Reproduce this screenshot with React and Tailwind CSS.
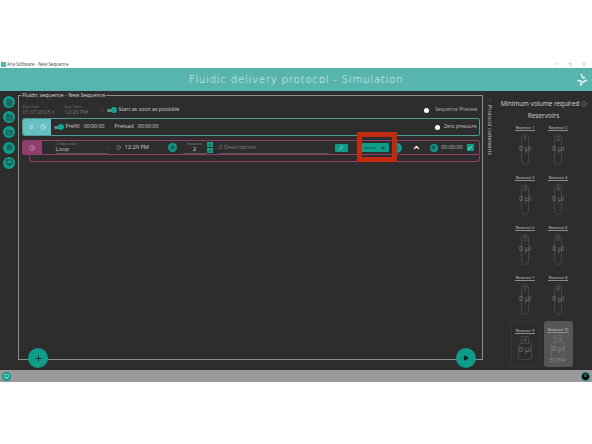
import React from "react"
import {
  Plus,
  Play,
  Clock,
  FileText,
  Image,
  FolderOpen,
  Settings,
  Monitor,
  Check,
  ChevronUp,
  ChevronLeft,
  Pencil,
  Info,
  Calendar,
  Minus,
  X,
  Square,
} from "lucide-react"

const sideIcons = [FileText, Image, FolderOpen, Settings, Monitor]

// ---------------------
// Small pieces
// ---------------------
const Toggle = () => (
  <span className="relative block w-[9px] h-[3px] rounded-full bg-[#5f8f8a]">
    <span className="absolute right-[-1px] top-[-1.5px] w-[6px] h-[6px] rounded-full bg-[#12a594]" />
  </span>
)

const RoundIcon = ({ icon: Icon, size = 12, iconSize = 7, className = "text-[#2d2d2d]" }) => (
  <span
    className={`flex items-center justify-center rounded-full bg-[#0f9d8a] ${className}`}
    style={{ width: size, height: size }}
  >
    <Icon size={iconSize} strokeWidth={2.5} />
  </span>
)

const ReservoirLabel = ({ n }) => (
  <span className="text-[3.5px] leading-[5px] text-[#d8d8d8] border-b border-[#8c8c8c] px-[1px] whitespace-nowrap">
    Reservoir {n}
  </span>
)

const Reservoir = ({ n }) => (
  <div className="flex flex-col items-center w-[29px] h-[48px] shrink-0 pt-[2px]">
    <ReservoirLabel n={n} />
    <div className="mt-[3px] flex flex-col items-center w-[8px] h-[31px] rounded-full border border-[#454545] text-[#666]">
      <span className="text-[7px] leading-[8px]">{n}</span>
      <span className="mt-[1px] text-[7px] leading-[9px] text-[#7d7d7d] whitespace-nowrap">0 µl</span>
    </div>
  </div>
)

const Bottle = ({ n, buffer }) => (
  <div
    className={`flex flex-col items-center w-[29px] h-[46px] -mt-[2px] pt-[6px] shrink-0 rounded-[3px] ${
      buffer ? "bg-[#565656]" : "border border-dotted border-[#3f3f3f]"
    }`}
  >
    <ReservoirLabel n={n} />
    <div
      className={`mt-[2px] w-[8px] h-[7px] rounded-t-[1px] border border-b-0 flex justify-center text-[6px] leading-[7px] ${
        buffer ? "border-[#666] text-[#808080]" : "border-[#454545] text-[#6a6a6a]"
      }`}
    >
      {n}
    </div>
    <div
      className={`w-[14px] h-[17px] rounded-[2px] border flex justify-center text-[7px] leading-[12px] whitespace-nowrap ${
        buffer ? "border-[#666] text-[#8c8c8c]" : "border-[#454545] text-[#7d7d7d]"
      }`}
    >
      0 µl
    </div>
    {buffer && <span className="-mt-[2px] text-[6px] leading-[7px] text-[#858585]">Buffer</span>}
  </div>
)

// ---------------------
// Component
// ---------------------
export default function App() {
  return (
    <div
      className="relative w-[592px] h-[444px] flex flex-col bg-white overflow-hidden text-[#d0d0d0]"
      style={{ fontFamily: '"Open Sans", "Noto Sans", sans-serif' }}
    >
      {/* Window title bar */}
      <div className="h-[68px] flex items-end justify-between pb-[1px] text-[#444]">
        <div className="flex items-center gap-[1px] pl-[1px]">
          <span className="w-[5px] h-[5px] bg-[#58b5ae]" />
          <span className="text-[4.4px] leading-[6px]">Aria Software - New Sequence</span>
        </div>
        <div className="flex items-center gap-[10px] pr-[6px] h-[6px] text-[#666]">
          <Minus size={4} />
          <Square size={3} />
          <X size={4} />
        </div>
      </div>

      {/* Header */}
      <div className="relative h-[23px] bg-[#58b5ae] flex items-center justify-center">
        <span
          className="text-[10.5px] tracking-[0.6px] font-extralight text-[#e4f3f1]"
          style={{ fontFamily: '"DejaVu Sans", sans-serif' }}
        >
          Fluidic delivery protocol - Simulation
        </span>
        <svg
          className="absolute right-0 top-0"
          width="22"
          height="23"
          viewBox="0 0 22 23"
          fill="none"
          stroke="#eef8f7"
          strokeWidth="1.4"
        >
          <path d="M11 6 13 10 15 9.5M7.5 12.5 11 13 10 14.5M10 17.5 13 14 17 12" />
        </svg>
      </div>

      {/* Main */}
      <div className="h-[279px] flex bg-[#2d2d2d]">
        <div className="w-[18px] shrink-0 flex flex-col items-center pt-[5px] gap-[3.2px]">
          {sideIcons.map((Icon, i) => (
            <RoundIcon key={i} icon={Icon} size={12} iconSize={7} />
          ))}
        </div>

        {/* Sequence frame */}
        <div className="relative w-[465px] h-[265px] mt-[4px] shrink-0 border-[1.5px] border-[#8d8d8d] px-[2.5px]">
          <span className="absolute left-[2px] top-[-4px] bg-[#2d2d2d] px-[1px] text-[5.4px] leading-[7px] text-[#dcdcdc] whitespace-nowrap">
            Fluidic sequence - New Sequence
          </span>

          {/* Start row */}
          <div className="h-[18px] flex items-center pt-[10px]">
            <div className="w-[41px] ml-[1px] text-[#787878]">
              <div className="text-[3.5px] leading-[4px]">Start Date</div>
              <div className="flex items-center gap-[1px] text-[5.5px] leading-[7px]">
                01.07.2025 <Calendar size={3} />
              </div>
            </div>
            <div className="w-[35px] ml-[1px] text-[#787878]">
              <div className="text-[3.5px] leading-[4px]">Start Time</div>
              <div className="text-[5.5px] leading-[7px]">12:29 PM</div>
            </div>
            <Clock size={4} className="text-[#555]" />
            <span className="ml-[3px]">
              <Toggle />
            </span>
            <span className="ml-[3px] text-[5.3px] whitespace-nowrap">Start as soon as possible</span>
            <span className="ml-auto w-[5px] h-[5px] rounded-full bg-white" />
            <span className="ml-[6px] mr-[2px] text-[5px] text-[#b5b5b5] whitespace-nowrap">Sequence Preview</span>
          </div>

          {/* Zero row */}
          <div className="mt-[4px] h-[18px] flex items-center rounded-[2px] border border-[#4f9a94] pr-[1px]">
            <div className="w-[28px] h-full shrink-0 flex items-center bg-[#66bfc0] text-[#e6f5f5] rounded-l-[2px]">
              <span className="ml-[7px] text-[6px]">0</span>
              <Clock size={6} className="ml-[7px]" />
            </div>
            <span className="ml-[3px]">
              <Toggle />
            </span>
            <span className="ml-[3px] text-[5.3px]">Prefill</span>
            <span className="ml-[4px] text-[5.3px]">00:00:00</span>
            <span className="ml-[10px] text-[5.3px]">Preload</span>
            <span className="ml-[4px] text-[5.3px]">00:00:00</span>
            <span className="ml-auto w-[5px] h-[5px] rounded-full bg-white" />
            <span className="ml-[4px] mr-[1px] text-[5px] text-[#c4c4c4] whitespace-nowrap">Zero pressure</span>
          </div>

          {/* Step */}
          <div className="mt-[4px] h-[15px] flex items-center rounded-[2px] border border-[#8f3e6d]">
            <div className="w-[19px] h-full shrink-0 flex items-center justify-center bg-[#8f3e6d] text-[#d9b9cc]">
              <Clock size={6} />
            </div>
            <div className="ml-[14px] w-[52px] h-full border-b border-[#555] text-[#bdbdbd]">
              <div className="mt-[1px] text-[3.5px] leading-[4px] text-[#8a8a8a]">⠿ Step action</div>
              <div className="text-[6px] leading-[7px]">Loop</div>
            </div>
            <span className="text-[6px] text-[#999]">-</span>
            <Clock size={5} className="ml-[7px] text-[#aaa]" />
            <span className="ml-[3px] text-[5.7px] whitespace-nowrap">12:29 PM</span>
            <span className="ml-[19px]">
              <RoundIcon icon={Settings} size={9} iconSize={5} />
            </span>
            <div className="ml-[6px] w-[23px] h-full border-b border-[#555] flex flex-col items-center">
              <span className="text-[3.5px] leading-[5px] text-[#8a8a8a] whitespace-nowrap">Iterations</span>
              <span className="text-[6px] leading-[7px]">2</span>
            </div>
            <div className="ml-[1px] flex flex-col gap-[1px]">
              <span className="w-[6px] h-[5px] flex items-center justify-center bg-[#0f9d8a] text-[#2d2d2d]">
                <Plus size={4} strokeWidth={3} />
              </span>
              <span className="w-[6px] h-[5px] flex items-center justify-center bg-[#0f9d8a] text-[#2d2d2d]">
                <Minus size={4} strokeWidth={3} />
              </span>
            </div>
            <div className="ml-[6px] w-[110px] h-full border-b border-[#555] flex items-center text-[#808080]">
              <span className="text-[6px] whitespace-nowrap">≡ Description</span>
            </div>
            <span className="ml-[6px] w-[13px] h-[8px] flex items-center justify-center bg-[#0f9d8a] rounded-[1px] text-[#e8e8e8]">
              <Pencil size={4} strokeWidth={2.5} />
            </span>
            <span className="ml-[13px] w-[28px] h-[9px] flex items-center justify-between px-[3px] bg-[#0f9d8a] rounded-[1px] text-[#1f2b2a]">
              <span className="text-[3.5px]">Variant</span>
              <Plus size={6} strokeWidth={2.5} />
            </span>
            <span className="ml-[3px]">
              <RoundIcon icon={Plus} size={10} iconSize={7} />
            </span>
            <ChevronUp size={9} strokeWidth={3} className="ml-[10px] text-white" />
            <span className="ml-[9px]">
              <RoundIcon icon={Settings} size={8} iconSize={5} />
            </span>
            <span className="ml-[3px] text-[5.5px] text-[#bdbdbd]">00:00:00</span>
            <span className="ml-[4px] w-[7px] h-[7px] flex items-center justify-center bg-[#0f9d8a] text-[#d8f0ec]">
              <Check size={6} strokeWidth={3} />
            </span>
          </div>
          <div className="ml-[7px] h-[7px] rounded-b-[3px] border border-t-0 border-[#8f3e6d]" />

          {/* Red annotation */}
          <div className="absolute left-[338px] top-[36px] w-[40px] h-[30px] border-[5px] border-[#c42a10]" />

          <span className="absolute left-[9px] bottom-[-9px] w-[20px] h-[20px] rounded-full bg-[#0f9d8a] flex items-center justify-center text-[#1c1c1c]">
            <Plus size={9} strokeWidth={2} />
          </span>
          <span className="absolute right-[6px] bottom-[-9px] w-[20px] h-[20px] rounded-full bg-[#0f9d8a] flex items-center justify-center text-[#1c1c1c]">
            <Play size={6} fill="#1c1c1c" />
          </span>
        </div>

        {/* Right panel */}
        <div className="w-[14px] shrink-0 flex flex-col items-center pt-[6px]">
          <ChevronLeft size={5} className="text-[#777]" />
          <span className="mt-[3px] text-[5.5px] leading-[6px] [writing-mode:vertical-rl] whitespace-nowrap text-[#c4c4c4]">
            Protocol comments
          </span>
        </div>
        <div className="flex-1 flex flex-col items-center pt-[8px]">
          <div className="flex items-center gap-[2px] -ml-[1px] text-[6.3px] leading-[9px] text-[#d6d6d6] whitespace-nowrap">
            Minimum volume required <Info size={6} className="text-[#888]" />
          </div>
          <div className="mt-[3px] -ml-[2px] text-[6.5px] leading-[9px]">Reservoirs</div>
          <div className="mt-[3px] -ml-[6px] grid grid-cols-[29px_29px] gap-x-[4px] gap-y-[2px]">
            {[1, 2, 3, 4, 5, 6, 7, 8].map(n => (
              <Reservoir key={n} n={n} />
            ))}
            <Bottle n={9} />
            <Bottle n={10} buffer />
          </div>
        </div>
      </div>

      {/* Status bar */}
      <div className="h-[12px] bg-[#9a9a9a] flex items-center justify-between px-[2px]">
        <RoundIcon icon={Monitor} size={9} iconSize={5} className="text-[#d8f0ec]" />
        <span className="w-[9px] h-[9px] rounded-full bg-black border-[1.5px] border-[#0f9d8a] flex items-center justify-center text-[4px] text-white">
          0
        </span>
      </div>
    </div>
  )
}
